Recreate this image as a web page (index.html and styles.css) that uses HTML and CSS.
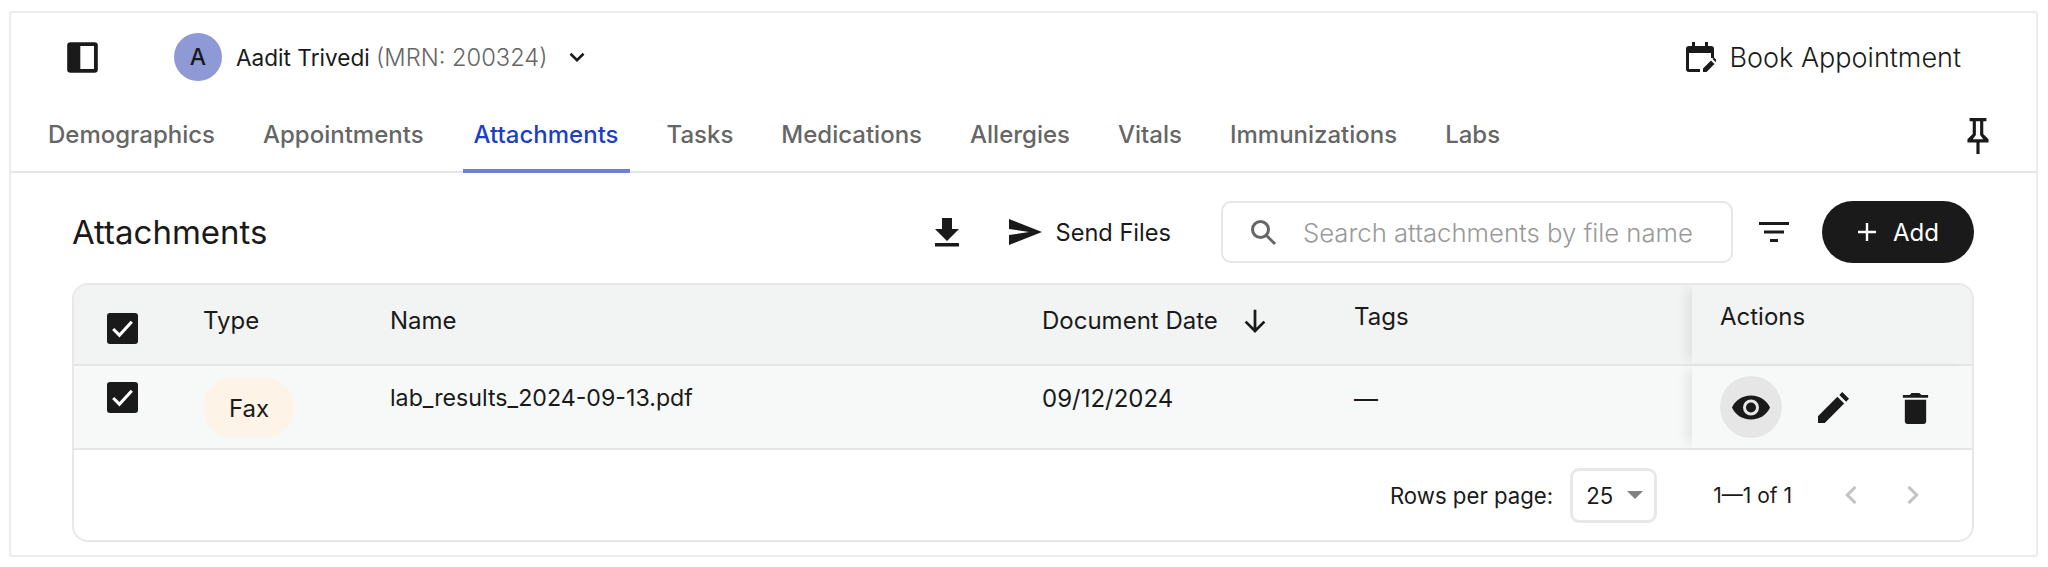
FILE: index.html
```html
<!DOCTYPE html>
<html lang="en">
<head>
    <meta charset="UTF-8">
    <title>Attachments</title>
    <link rel="stylesheet" href="styles.css">
</head>
<body>
    <div class="card">
        <!-- Patient bar -->
        <div class="patient-bar">
            <svg class="panel-icon" viewBox="0 0 32 32"><rect x="2" y="2" width="28" height="28" rx="3" fill="#1a1a1a"/><rect x="14" y="5.5" width="12.5" height="21" fill="#fff"/></svg>
            <div class="avatar">A</div>
            <div class="patient-name">Aadit Trivedi <span class="mrn">(MRN: 200324)</span></div>
            <svg class="chevron" viewBox="0 0 24 24"><path d="M6 9l6 6 6-6" fill="none" stroke="#1a1a1a" stroke-width="2.4"/></svg>
            <div class="book">
                <svg class="book-icon" viewBox="0 0 32 32"><path d="M8 1h3v4h10V1h3v4h3a3 3 0 0 1 3 3v9h-3v-5H5v16h11v3H5a3 3 0 0 1-3-3V8a3 3 0 0 1 3-3h3z" fill="#1a1a1a"/><path d="M19 31v-3.5l8-8 3.5 3.5-8 8zM28.500 18l1.500-1.500 3 3-1.500 1.500z" fill="#1a1a1a"/></svg>
                Book Appointment
            </div>
        </div>

        <!-- Tabs -->
        <div class="tabs">
            <div class="tab">Demographics</div>
            <div class="tab">Appointments</div>
            <div class="tab active">Attachments</div>
            <div class="tab">Tasks</div>
            <div class="tab">Medications</div>
            <div class="tab">Allergies</div>
            <div class="tab">Vitals</div>
            <div class="tab">Immunizations</div>
            <div class="tab">Labs</div>
            <svg class="pin-icon" viewBox="0 0 24 36"><path d="M4 2h16v3h-3v12l5 5v3h-8.500v11h-3V25H2v-3l5-5V5H4zM10 5v13l-3 4h10l-3-4V5z" fill="#1a1a1a" fill-rule="evenodd"/></svg>
        </div>

        <!-- Toolbar -->
        <div class="toolbar">
            <h2 class="title">Attachments</h2>
            <svg class="download-icon" viewBox="0 0 28 32"><path d="M9 2h10v11h7L14 25 2 13h7zM2 27h24v3.500H2z" fill="#1a1a1a"/></svg>
            <div class="send">
                <svg class="send-icon" viewBox="0 0 34 28"><path d="M1 1l33 13L1 27v-10l20-3L1 11z" fill="#1a1a1a"/></svg>
                Send Files
            </div>
            <div class="search">
                <svg class="search-icon" viewBox="0 0 28 28"><circle cx="11.500" cy="11.500" r="8" fill="none" stroke="#666" stroke-width="3"/><path d="M17.500 17.500L26 26" stroke="#666" stroke-width="3"/></svg>
                <span class="placeholder">Search attachments by file name</span>
            </div>
            <svg class="filter-icon" viewBox="0 0 32 24"><path d="M1 2h30v3H1zM6 10.500h20v3H6zM12 19h8v3h-8z" fill="#1a1a1a"/></svg>
            <div class="add-btn">
                <svg class="plus-icon" viewBox="0 0 20 20"><path d="M8.800 1h2.400v7.800H19v2.400h-7.800V19H8.800v-7.800H1V8.800h7.800z" fill="#fff"/></svg>
                Add
            </div>
        </div>

        <!-- Table -->
        <div class="table">
            <div class="row head-row">
                <div class="cell check-cell"><span class="checkbox"><svg viewBox="0 0 30 30"><path d="M6 15.500l6 6 12-13" fill="none" stroke="#fff" stroke-width="3"/></svg></span></div>
                <div class="cell">Type</div>
                <div class="cell">Name</div>
                <div class="cell date-head">Document Date
                    <svg class="sort-icon" viewBox="0 0 24 24"><path d="M12 3v17M4.500 12.500L12 20l7.500-7.500" fill="none" stroke="#1a1a1a" stroke-width="2.200"/></svg>
                </div>
                <div class="cell tags-head">Tags</div>
                <div class="cell actions-cell">Actions</div>
            </div>
            <div class="row body-row">
                <div class="cell check-cell"><span class="checkbox"><svg viewBox="0 0 30 30"><path d="M6 15.500l6 6 12-13" fill="none" stroke="#fff" stroke-width="3"/></svg></span></div>
                <div class="cell"><span class="pill">Fax</span></div>
                <div class="cell file-name">lab_results_2024-09-13.pdf</div>
                <div class="cell">09/12/2024</div>
                <div class="cell">—</div>
                <div class="cell actions-cell actions-body">
                    <span class="action eye"><svg viewBox="0 0 40 28"><path d="M20 2C11 2 4 7 1 14c3 7 10 12 19 12s16-5 19-12C36 7 29 2 20 2zm0 20a8 8 0 1 1 0-16 8 8 0 0 1 0 16z" fill="#1a1a1a"/><circle cx="20" cy="14" r="5" fill="#1a1a1a"/></svg></span>
                    <span class="action"><svg viewBox="0 0 34 34"><path d="M1 33v-7L21 6l7 7L8 33zM23 4l3-3 7 7-3 3z" fill="#1a1a1a"/></svg></span>
                    <span class="action"><svg viewBox="0 0 28 34"><path d="M3 9h22v22a3 3 0 0 1-3 3H6a3 3 0 0 1-3-3zM1 4h7l2-2h8l2 2h7v3H1z" fill="#1a1a1a"/></svg></span>
                </div>
            </div>
            <div class="pagination">
                <span>Rows per page:</span>
                <div class="page-select">25 <span class="caret"></span></div>
                <span class="page-count">1—1 of 1</span>
                <svg class="page-arrow" viewBox="0 0 24 24"><path d="M15 5l-7 7 7 7" fill="none" stroke="#c4c4c4" stroke-width="2.600"/></svg>
                <svg class="page-arrow" viewBox="0 0 24 24"><path d="M9 5l7 7-7 7" fill="none" stroke="#c4c4c4" stroke-width="2.600"/></svg>
            </div>
        </div>
    </div>
</body>
</html>
```

FILE: styles.css
```css
body {
    font-family: 'Inter', sans-serif;
    margin: 0;
    padding: 11px 9px;
    background: #fff;
    color: #1a1a1a;
}

.card {
    width: 2029px;
    height: 546px;
    box-sizing: border-box;
    border: 2px solid #ececec;
    border-radius: 3px;
    overflow: hidden;
}

.patient-bar {
    height: 88px;
    display: flex;
    align-items: center;
    padding-left: 54px;
}

.panel-icon {
    width: 35px;
    height: 35px;
}

.avatar {
    width: 48px;
    height: 48px;
    margin-left: 74px;
    border-radius: 50%;
    background: #8f99d6;
    display: flex;
    align-items: center;
    justify-content: center;
    font-size: 23px;
    font-weight: 500;
}

.patient-name {
    margin-left: 14px;
    font-size: 22.6px;
}

.mrn {
    color: #666;
    font-size: 23.7px;
    font-weight: 300;
}

.chevron {
    width: 26px;
    height: 26px;
    margin-left: 17px;
}

.book {
    margin-left: auto;
    margin-right: 75px;
    display: flex;
    align-items: center;
    gap: 14px;
    font-size: 27px;
    font-weight: 300;
}

.book-icon {
    width: 32px;
    height: 32px;
}

.tabs {
    height: 72px;
    box-sizing: border-box;
    border-bottom: 2px solid #e6e6e6;
    display: flex;
    padding-left: 26px;
    gap: 26px;
    position: relative;
}

.tab {
    padding: 0 11px;
    line-height: 68px;
    font-size: 24px;
    font-weight: 500;
    color: #666;
    height: 72px;
    box-sizing: border-box;
}

.tab:nth-child(2) {
    margin-right: 2px;
}

.tab.active {
    color: #1e3fc4;
    border-bottom: 4px solid #6f7fd8;
}

.pin-icon {
    width: 26px;
    height: 38px;
    margin-left: auto;
    margin-right: 45px;
    margin-top: 15px;
}

.toolbar {
    height: 110px;
    box-sizing: border-box;
    padding-top: 8px;
    display: flex;
    align-items: center;
    padding-left: 61px;
}

.title {
    font-size: 33px;
    font-weight: 400;
    margin: 0;
}

.download-icon {
    width: 28px;
    height: 32px;
    margin-left: auto;
}

.send {
    display: flex;
    align-items: center;
    gap: 14px;
    margin-left: 47px;
    font-size: 23.6px;
}

.send-icon {
    width: 34px;
    height: 28px;
}

.search {
    width: 512px;
    height: 62px;
    box-sizing: border-box;
    border: 2px solid #e6e6e6;
    border-radius: 10px;
    margin-left: 50px;
    display: flex;
    align-items: center;
    padding-left: 26px;
    gap: 26px;
}

.search-icon {
    width: 28px;
    height: 28px;
}

.placeholder {
    font-size: 25.7px;
    font-weight: 300;
    color: #999;
}

.filter-icon {
    width: 32px;
    height: 24px;
    margin-left: 25px;
}

.add-btn {
    width: 152px;
    height: 62px;
    border-radius: 31px;
    background: #1a1a1a;
    color: #fff;
    margin-left: 32px;
    margin-right: 62px;
    display: flex;
    align-items: center;
    justify-content: center;
    gap: 16px;
    font-size: 24px;
}

.plus-icon {
    width: 20px;
    height: 20px;
}

.table {
    margin: 0 62px 0 61px;
    border: 2px solid #e8e8e8;
    border-radius: 16px;
    overflow: hidden;
    font-size: 24px;
}

.row {
    display: grid;
    grid-template-columns: 129px 187px 652px 312px 338px 1fr;
    border-bottom: 2px solid #e6e6e6;
}

.head-row {
    height: 79px;
    background: #f2f3f3;
}

.body-row {
    height: 82px;
    background: #f7f8f8;
}

.cell {
    padding-top: 21px;
}

.body-row .cell {
    padding-top: 18px;
}

.check-cell {
    padding-left: 33px;
}

.checkbox {
    display: block;
    width: 31px;
    height: 31px;
    margin-top: 7px;
    border-radius: 3px;
    background: #1a1a1a;
}

.body-row .checkbox {
    margin-top: -2px;
}

.checkbox svg {
    display: block;
}

.date-head {
    display: flex;
    align-items: flex-start;
    gap: 22px;
}

.sort-icon {
    width: 30px;
    height: 30px;
}

.tags-head {
    padding-top: 17px;
}

.file-name {
    font-size: 23.2px;
}

.actions-cell {
    padding-left: 28px;
    padding-top: 17px;
    box-shadow: -10px 0 10px -4px rgba(0, 0, 0, 0.07);
}

.body-row .actions-body {
    display: flex;
    padding-top: 10px;
    gap: 20px;
}

.action {
    width: 62px;
    height: 62px;
    border-radius: 50%;
    display: flex;
    align-items: center;
    justify-content: center;
}

.action svg {
    width: 33px;
    height: 33px;
}

.eye {
    background: #e6e6e6;
}

.eye svg {
    width: 40px;
    height: 29px;
}

.pill {
    display: flex;
    align-items: center;
    justify-content: center;
    width: 90px;
    height: 60px;
    margin: -6px 0 0 1px;
    border-radius: 28px;
    background: #fdf3e6;
}

.pagination {
    height: 90px;
    display: flex;
    align-items: center;
    justify-content: flex-end;
    padding-right: 46px;
    font-size: 22.2px;
}

.page-select {
    width: 87px;
    height: 55px;
    box-sizing: border-box;
    border: 3px solid #e8e8e8;
    border-radius: 9px;
    margin-left: 17px;
    display: flex;
    align-items: center;
    padding-left: 13px;
    gap: 14px;
}

.caret {
    width: 0;
    height: 0;
    border-left: 8px solid transparent;
    border-right: 8px solid transparent;
    border-top: 8px solid #808080;
}

.page-count {
    margin-left: 56px;
    margin-right: 14px;
    font-size: 21px;
}

.page-arrow {
    width: 28px;
    height: 28px;
    margin-left: 32px;
}
```
